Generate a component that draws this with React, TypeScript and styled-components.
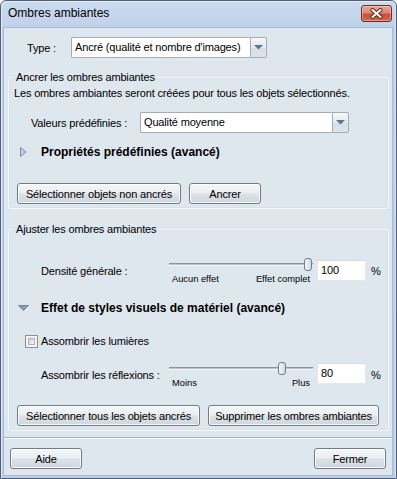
import React from "react";
import styled, { createGlobalStyle } from "styled-components";

const GlobalStyle = createGlobalStyle`
  html, body { margin: 0; padding: 0; }
  body {
    width: 397px; height: 479px; overflow: hidden; background: #fff;
    font-family: "Liberation Sans", Arial, sans-serif; font-size: 11px;
    letter-spacing: -0.16px; color: #000;
  }
  * { box-sizing: border-box; }
`;

const Window = styled.div`
  width: 397px;
  height: 479px;
  border: 1px solid #4f5f78;
  border-radius: 6px 6px 0 0;
  background: linear-gradient(#cbdbef, #bfd1ea 27px, #bccfe8);
  display: flex;
  flex-direction: column;
  box-shadow: inset 1px 1px 0 rgba(255, 255, 255, 0.55), inset -1px 0 0 rgba(255, 255, 255, 0.35);
`;

const TitleBar = styled.div`
  height: 27px;
  display: flex;
  align-items: flex-start;
  justify-content: space-between;
  padding: 0 4px 0 7px;
`;

const Title = styled.div`
  font-size: 12px;
  letter-spacing: 0;
  line-height: 16px;
  margin-top: 4px;
  color: #000;
`;

const CloseButton = styled.div`
  width: 31px;
  height: 17px;
  margin-top: 4px;
  border: 1px solid #6e2b22;
  border-radius: 3px;
  background: linear-gradient(#e7a595 0%, #d98a76 45%, #c5503b 55%, #cf6a4f 100%);
  box-shadow: inset 0 0 0 1px rgba(255, 255, 255, 0.35);
  display: flex;
  align-items: center;
  justify-content: center;
`;

const Client = styled.div`
  flex: 1;
  margin: 0 4px 3px 3px;
  background: #dee6ee;
  box-shadow: 0 0 0 1px #a9bbd2;
  display: flex;
  flex-direction: column;
`;

const TypeRow = styled.div`
  margin-top: 9px;
  padding-left: 23px;
  display: flex;
  align-items: center;
  height: 21px;
`;

const Label = styled.div<{ $w: number; $top?: number }>`
  width: ${(p) => p.$w}px;
  flex: none;
  line-height: 14px;
  margin-top: ${(p) => p.$top ?? 0}px;
  white-space: nowrap;
`;

const Combo = styled.div<{ $w: number }>`
  width: ${(p) => p.$w}px;
  height: 21px;
  display: flex;
  flex: none;
`;

const ComboField = styled.div`
  flex: 1;
  background: #fff;
  border: 1px solid #a4acb6;
  border-right: none;
  border-radius: 2px 0 0 2px;
  padding-left: 3px;
  line-height: 19px;
  white-space: nowrap;
  overflow: hidden;
`;

const ComboArrow = styled.div`
  width: 17px;
  border: 1px solid #a4acb6;
  border-radius: 0 2px 2px 0;
  background: linear-gradient(#f6f8fa, #e3e9ef 50%, #d6dee6 51%, #dfe5eb);
  display: flex;
  align-items: center;
  justify-content: center;
`;

const Group = styled.fieldset<{ $top: number }>`
  margin: ${(p) => p.$top}px 3px 0 4px;
  padding: 0 5px 4px 5px;
  border: 1px solid #f6f8fa;
  border-radius: 3px;
  min-width: 0;
  box-shadow: inset 0 0 0 1px rgba(200, 210, 220, 0.25);
`;

const Legend = styled.legend`
  padding: 0 2px;
  line-height: 14px;
`;

const Description = styled.div`
  margin-top: 2px;
  line-height: 14px;
  white-space: nowrap;
`;

const FormRow = styled.div<{ $top: number; $left: number }>`
  margin-top: ${(p) => p.$top}px;
  padding-left: ${(p) => p.$left}px;
  display: flex;
  align-items: center;
`;

const SliderRow = styled.div<{ $top: number }>`
  margin-top: ${(p) => p.$top}px;
  padding-left: 27px;
  display: flex;
  align-items: flex-start;
`;

const Expander = styled.div<{ $top: number; $left: number; $gap: number }>`
  margin-top: ${(p) => p.$top}px;
  padding-left: ${(p) => p.$left}px;
  display: flex;
  align-items: center;
  gap: ${(p) => p.$gap}px;
  height: 14px;
`;

const ExpanderText = styled.div`
  font-weight: bold;
  font-size: 12px;
  letter-spacing: 0;
  line-height: 14px;
  white-space: nowrap;
`;

const ButtonRow = styled.div<{ $top: number }>`
  margin-top: ${(p) => p.$top}px;
  padding-left: 3px;
  display: flex;
  gap: 8px;
`;

const Button = styled.div<{ $w: number }>`
  width: ${(p) => p.$w}px;
  height: 21px;
  flex: none;
  border: 1px solid #727c88;
  border-radius: 3px;
  background: linear-gradient(#f4f6f8 0%, #eaeef2 48%, #dbe1e7 52%, #d0d7de 100%);
  box-shadow: inset 0 0 0 1px rgba(255, 255, 255, 0.8);
  display: flex;
  align-items: center;
  justify-content: center;
  white-space: nowrap;
  line-height: 14px;
`;

const SliderBlock = styled.div`
  width: 146px;
  flex: none;
  display: flex;
  flex-direction: column;
`;

const TrackArea = styled.div`
  position: relative;
  height: 13px;
`;

const Track = styled.div`
  position: absolute;
  left: 0;
  top: 5px;
  width: 144px;
  height: 3px;
  border-top: 1px solid #8593a3;
  border-bottom: 1px solid #f4f7f9;
  background: #b9c4cf;
`;

const Thumb = styled.div`
  position: absolute;
  top: 0;
  width: 8px;
  height: 13px;
  border: 1px solid #6f7d8c;
  border-radius: 3px;
  background: linear-gradient(90deg, #f5f7f9, #dfe5eb 60%, #cfd7df);
`;

const TickLabels = styled.div`
  margin-top: 3px;
  padding: 0 5px 0 3px;
  display: flex;
  justify-content: space-between;
  font-size: 9.3px;
  letter-spacing: 0;
  line-height: 11px;
`;

const ValueInput = styled.div<{ $top: number }>`
  width: 49px;
  height: 21px;
  flex: none;
  margin: ${(p) => p.$top}px 0 0 2px;
  background: #fff;
  border: 1px solid #e4e9ee;
  border-top-color: #d5dce3;
  padding: 2px 0 0 3px;
  line-height: 14px;
`;

const Percent = styled.div`
  margin: 6px 0 0 5px;
  line-height: 14px;
`;

const CheckBox = styled.div`
  width: 13px;
  height: 13px;
  flex: none;
  margin-right: 3px;
  border: 1px solid #8e8f8f;
  background: #f4f4f4;
  padding: 2px;
  & > div {
    width: 100%;
    height: 100%;
    border: 1px solid #aeb3b9;
    background: linear-gradient(135deg, #cbcfd5, #f6f6f6);
  }
`;

const Separator = styled.div`
  margin-top: 6px;
  height: 2px;
  border-top: 1px solid #a3afbc;
  border-bottom: 1px solid #f8fafc;
`;

const BottomBar = styled.div`
  margin-top: 9px;
  padding: 0 6px;
  display: flex;
  justify-content: space-between;
`;

const ArrowDown = () => (
  <svg width="9" height="5" viewBox="0 0 9 5">
    <polygon points="0,0 9,0 4.5,4.5" fill="#5f738c" />
  </svg>
);

const CollapsedIcon = () => (
  <svg width="7" height="10" viewBox="0 0 7 10">
    <polygon points="0.5,0.5 6,5 0.5,9.5" fill="#c3cfdc" stroke="#7d8fa6" strokeWidth="1" />
  </svg>
);

const ExpandedIcon = () => (
  <svg width="11" height="6" viewBox="0 0 11 6">
    <polygon points="0.5,0.5 10.5,0.5 5.5,5.5" fill="#8c9aab" stroke="#77879a" strokeWidth="1" />
  </svg>
);

const CloseGlyph = () => (
  <svg width="13" height="11" viewBox="0 0 13 11">
    <path d="M2.5,2 L10.5,9 M10.5,2 L2.5,9" stroke="#5a2018" strokeWidth="4" strokeLinecap="round" />
    <path d="M2.5,2 L10.5,9 M10.5,2 L2.5,9" stroke="#ffffff" strokeWidth="2.2" strokeLinecap="round" />
  </svg>
);

type SliderProps = { value: number; min: string; max: string; inputTop: number; top: number; label: string };

const SliderField: React.FC<SliderProps> = ({ value, min, max, inputTop, top, label }) => (
  <SliderRow $top={top}>
    <Label $w={128} $top={6}>{label}</Label>
    <SliderBlock>
      <TrackArea>
        <Track />
        <Thumb style={{ left: 5 + (value / 100) * 130 }} />
      </TrackArea>
      <TickLabels>
        <span>{min}</span>
        <span>{max}</span>
      </TickLabels>
    </SliderBlock>
    <ValueInput $top={inputTop}>{value}</ValueInput>
    <Percent>%</Percent>
  </SliderRow>
);

export default function App() {
  return (
    <>
      <GlobalStyle />
      <Window>
        <TitleBar>
          <Title>Ombres ambiantes</Title>
          <CloseButton>
            <CloseGlyph />
          </CloseButton>
        </TitleBar>
        <Client>
          <TypeRow>
            <Label $w={44}>Type :</Label>
            <Combo $w={196}>
              <ComboField>Ancré (qualité et nombre d'images)</ComboField>
              <ComboArrow>
                <ArrowDown />
              </ComboArrow>
            </Combo>
          </TypeRow>

          <Group $top={12}>
            <Legend>Ancrer les ombres ambiantes</Legend>
            <Description>Les ombres ambiantes seront créées pour tous les objets sélectionnés.</Description>
            <FormRow $top={12} $left={17}>
              <Label $w={109}>Valeurs prédéfinies :</Label>
              <Combo $w={209}>
                <ComboField>Qualité moyenne</ComboField>
                <ComboArrow>
                  <ArrowDown />
                </ComboArrow>
              </Combo>
            </FormRow>
            <Expander $top={12} $left={6} $gap={14}>
              <CollapsedIcon />
              <ExpanderText>Propriétés prédéfinies (avancé)</ExpanderText>
            </Expander>
            <ButtonRow $top={24}>
              <Button $w={164}>Sélectionner objets non ancrés</Button>
              <Button $w={72}>Ancrer</Button>
            </ButtonRow>
          </Group>

          <Group $top={13}>
            <Legend>Ajuster les ombres ambiantes</Legend>
            <SliderField
              top={22}
              label="Densité générale :"
              value={100}
              min="Aucun effet"
              max="Effet complet"
              inputTop={2}
            />
            <Expander $top={16} $left={4} $gap={12}>
              <ExpandedIcon />
              <ExpanderText>Effet de styles visuels de matériel (avancé)</ExpanderText>
            </Expander>
            <FormRow $top={19} $left={11}>
              <CheckBox>
                <div />
              </CheckBox>
              <Label $w={200}>Assombrir les lumières</Label>
            </FormRow>
            <SliderField
              top={14}
              label="Assombrir les réflexions :"
              value={80}
              min="Moins"
              max="Plus"
              inputTop={1}
            />
            <ButtonRow $top={16}>
              <Button $w={183}>Sélectionner tous les objets ancrés</Button>
              <Button $w={171}>Supprimer les ombres ambiantes</Button>
            </ButtonRow>
          </Group>

          <Separator />
          <BottomBar>
            <Button $w={72}>Aide</Button>
            <Button $w={72}>Fermer</Button>
          </BottomBar>
        </Client>
      </Window>
    </>
  );
}
